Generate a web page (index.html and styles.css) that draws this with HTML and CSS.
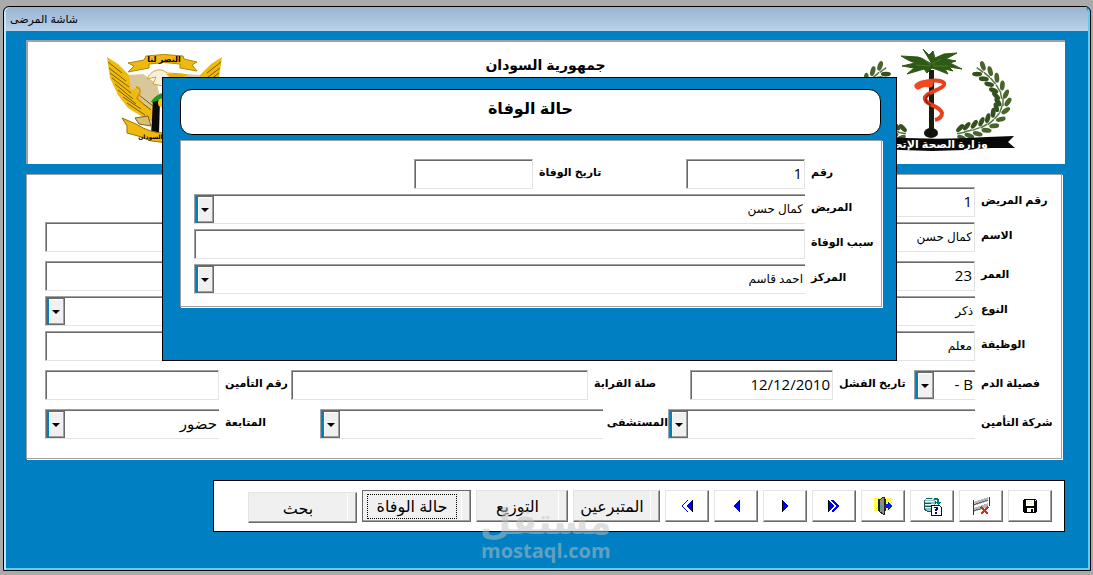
FILE: index.html
```html
<!DOCTYPE html>
<html lang="ar" dir="rtl">
<head>
    <meta charset="UTF-8">
    <meta name="viewport" content="width=device-width, initial-scale=1.0">
    <title>شاشة المرضى</title>
    <link rel="stylesheet" href="styles.css">
</head>
<body>

    <div class="window">
        <div class="titlebar">شاشة المرضى</div>

        <main class="content">
            <header class="header">
                <!-- وزارة الصحة -->
                <svg class="emblem-health" width="186" height="112" viewBox="0 0 186 112">
                    <defs>
                        <g id="leaf">
                            <ellipse cx="0" cy="-5" rx="5" ry="2.4" transform="rotate(-35 0 -5)" fill="#34501d"/>
                            <ellipse cx="0" cy="5" rx="5" ry="2.4" transform="rotate(35 0 5)" fill="#47652c"/>
                            <path d="M-4 0H4" stroke="#5b7440" stroke-width="1.5"/>
                        </g>
                        <g id="laurel">
                            <use href="#leaf" transform="translate(144 26) rotate(215)"/>
                            <use href="#leaf" transform="translate(151 31) rotate(220)"/>
                            <use href="#leaf" transform="translate(157 37) rotate(230)"/>
                            <use href="#leaf" transform="translate(162 44) rotate(240)"/>
                            <use href="#leaf" transform="translate(165 51) rotate(260)"/>
                            <use href="#leaf" transform="translate(167 58) rotate(270)"/>
                            <use href="#leaf" transform="translate(165 65) rotate(290)"/>
                            <use href="#leaf" transform="translate(161 72) rotate(310)"/>
                            <use href="#leaf" transform="translate(155 78) rotate(320)"/>
                            <use href="#leaf" transform="translate(148 82) rotate(330)"/>
                            <use href="#leaf" transform="translate(140 85) rotate(340)"/>
                            <use href="#leaf" transform="translate(132 87) rotate(345)"/>
                            <use href="#leaf" transform="translate(125 89) rotate(350)"/>
                        </g>
                    </defs>
                    <use href="#laurel"/>
                    <use href="#laurel" transform="translate(191 0) scale(-1 1)"/>
                    <path d="M93 26L98 26L98 88L93 88Z" fill="#1d1a12"/>
                    <path d="M96 20L87 5L93 11L97 7L99 14L108 10L121 9L110 15L120 17L114 19L126 25L113 23L117 27L109 25L112 30L102 26L96 24L91 29L88 25L78 28L71 30L78 24L66 22L79 19L72 16L65 12L82 13L85 14Z" fill="#2f5a16" stroke="#2f5a16" stroke-width="1"/>
                    <path d="M95 21L86 14M96 20L105 15M97 22L112 22M94 22L80 21" stroke="#4c7a26" stroke-width="1"/>
                    <path d="M80 42C88 36 104 35 108 39C110 45 92 47 89 53C87 61 104 61 106 69C106 73 103 75 99 76" fill="none" stroke="#e8401c" stroke-width="4"/>
                    <path d="M82 42C86 39 90 39 94 40" stroke="#f04a20" stroke-width="7" stroke-linecap="round"/>
                    <path d="M94 50C88 54 89 59 95 61" fill="none" stroke="#8a2a12" stroke-width="2"/>
                    <ellipse cx="95" cy="89" rx="7" ry="5" fill="#15120c"/>
                    <path d="M12 93L40 92Q95 97 151 93L178 92L172 98L179 104L155 104Q95 110 40 104L12 104L19 98Z" fill="#080808"/>
                    <text x="95" y="104" class="ribbon-white">وزارة الصحة الإتحادية</text>
                </svg>

                <h1 class="country">جمهورية السودان</h1>

                <!-- شعار السودان -->
                <svg class="emblem-sudan" width="126" height="98" viewBox="0 0 126 98">
                    <defs>
                        <g id="wing">
                            <path d="M28 25L42 24L56 34L62 60L50 72L36 60L22 40Z" fill="#d9c79a"/>
                            <path d="M6 7L17 14L28 25L30 40L36 38L39 52L50 58L54 72L40 66L27 58L17 45L9 28Z" fill="#eebb0c"/>
                            <path d="M7 12L21 23M8 18L25 31M9 23L28 37M11 28L30 43M14 34L32 49M17 40L35 54M22 47L40 59M26 53L44 65M35 48L50 60M38 45L52 56" stroke="#7d5b08" stroke-width="1"/>
                        </g>
                    </defs>
                    <use href="#wing"/>
                    <use href="#wing" transform="translate(127 0) scale(-1 1)"/>
                    <path d="M46 29C50 20 60 17 66 23L82 24L87 27L76 30L68 27L62 36L52 34L55 27Z" fill="#f7f1dc" stroke="#c9a23a" stroke-width="1"/>
                    <path d="M65 24L86 24L84 27L70 28Z" fill="#e3ae10"/>
                    <path d="M35 37C41 38 39 44 36 48L42 54" fill="none" stroke="#d59c08" stroke-width="2"/>
                    <path d="M52 84V52Q63 38 74 52V84Z" fill="#fff" stroke="#9a7a20" stroke-width="1"/>
                    <path d="M52 53Q63 38 74 53" fill="none" stroke="#1e9a22" stroke-width="5"/>
                    <path d="M52 52L59 50L58 84L50 84Z" fill="#0a0a0a"/>
                    <circle cx="61" cy="53" r="4" fill="#f3c81a"/>
                    <path d="M34 68L47 66L50 76L38 74Z" fill="#d8c070" stroke="#806010" stroke-width="1"/>
                    <path d="M45 6Q63 3 82 6L83 9L96 12L91 15L96 21L79 18V14Q63 11 48 14V18L27 22L33 16L27 13L43 10Z" fill="#efb90e" stroke="#b58408" stroke-width="1"/>
                    <path d="M26 76L21 68L35 74Q63 92 92 74L105 68L100 76L102 84L90 86Q63 99 37 86L26 83Z" fill="#efb90e" stroke="#9a7208" stroke-width="1"/>
                    <text x="63" y="12" class="ribbon-black">النصر لنا</text>
                    <text x="63" y="89" class="ribbon-black ribbon-small">جمهورية السودان</text>
                </svg>
            </header>

            <form class="patient">
                <div class="row">
                    <label class="lead" for="pid">رقم المريض</label>
                    <input class="field w-id" id="pid" type="text" value="1">
                </div>
                <div class="row">
                    <label class="lead" for="pname">الاسم</label>
                    <input class="field name" id="pname" type="text" value="كمال حسن">
                </div>
                <div class="row spaced">
                    <label class="lead" for="age">العمر</label>
                    <input class="field" id="age" type="text" value="23">
                </div>
                <div class="row">
                    <label class="lead" for="gender">النوع</label>
                    <span class="combo"><select class="name" id="gender"><option>ذكر</option><option>أنثى</option></select></span>
                </div>
                <div class="row">
                    <label class="lead" for="job">الوظيفة</label>
                    <input class="field name" id="job" type="text" value="معلم">
                </div>
                <div class="row spaced">
                    <label class="lead" for="blood">فصيلة الدم</label>
                    <span class="combo w-blood"><select id="blood"><option>B -</option><option>B +</option></select></span>
                    <label class="l-fail" for="fail">تاريخ الفشل</label>
                    <input class="field w-date" id="fail" type="text" value="12/12/2010">
                    <label class="l-kin" for="kin">صلة القرابة</label>
                    <input class="field" id="kin" type="text">
                    <label class="l-insno" for="insno">رقم التأمين</label>
                    <input class="field w-last" id="insno" type="text">
                </div>
                <div class="row spaced">
                    <label class="lead" for="company">شركة التأمين</label>
                    <span class="combo"><select id="company"><option></option></select></span>
                    <label class="l-hosp" for="hospital">المستشفى</label>
                    <span class="combo w-hosp"><select id="hospital"><option></option></select></span>
                    <label class="l-follow" for="follow">المتابعة</label>
                    <span class="combo w-last"><select id="follow"><option>حضور</option><option>غياب</option></select></span>
                </div>
            </form>

            <nav class="toolbar">
                <button type="button" class="btn icon" aria-label="حفظ">
                    <svg width="14" height="14" viewBox="0 0 14 14" shape-rendering="crispEdges">
                        <path d="M1 0H13V1H14V13H13V14H1V13H0V1H1Z" fill="#000"/>
                        <path d="M3 1H11V7H3Z" fill="#fffff0"/>
                        <path d="M4 2h1v1h-1zM6 2h1v1h-1zM8 2h1v1h-1zM4 4h1v1h-1zM6 4h1v1h-1zM8 4h1v1h-1z" fill="#f0e860"/>
                        <path d="M4 9H11V13H4Z" fill="#fff"/>
                        <path d="M8 10H10V13H8Z" fill="#000"/>
                        <path d="M12 1H13V2H12Z" fill="#fff"/>
                    </svg>
                </button>
                <button type="button" class="btn icon" aria-label="حذف">
                    <svg width="18" height="18" viewBox="0 0 18 18" shape-rendering="crispEdges">
                        <path d="M1 5L16 0V4L1 9ZM1 11L16 6V10L1 15Z" fill="#b8b8b8"/>
                        <path d="M1 8L16 3M1 14L11 11" stroke="#666" stroke-width="1"/>
                        <path d="M1 3V18M17 0V9" stroke="#333" stroke-width="1"/>
                        <path d="M9 10L16 17M16 10L9 17" stroke="#e02a10" stroke-width="2"/>
                    </svg>
                </button>
                <button type="button" class="btn icon" aria-label="استعلام">
                    <svg width="19" height="19" viewBox="0 0 19 19" shape-rendering="crispEdges">
                        <path d="M1 3L4 1H9L12 3V12L9 14H4L1 12Z" fill="#8fc0c0"/>
                        <path d="M2 4H11M2 7H11M2 10H11M3 2H10" stroke="#e8f8f8" stroke-width="1"/>
                        <path d="M1 3V12L4 14H8M12 4V7M1 6H8M1 9H8M3 1H9" fill="none" stroke="#155a5a" stroke-width="1"/>
                        <path d="M11 1H14L16 3V5H18L15 8L12 5H14V3H11Z" fill="#007878"/>
                        <path d="M8 8H16L18 10V18H8Z" fill="#fff" stroke="#101030" stroke-width="1"/>
                        <path d="M11 10H15V13H14V14H12V12H13V11H11ZM12 15H14V17H12Z" fill="#000080"/>
                    </svg>
                </button>
                <button type="button" class="btn icon" aria-label="خروج">
                    <svg width="18" height="18" viewBox="0 0 18 18" shape-rendering="crispEdges">
                        <path d="M0 1H17V14H0Z" fill="#ffff3c"/>
                        <path d="M0 2H4M0 4H4M0 6H4M0 8H4M0 10H4M0 12H4M12 2H17M12 4H17M12 13H17" stroke="#fff" stroke-width="1" stroke-dasharray="1 1"/>
                        <path d="M4 14V2H11V14" fill="#fff" stroke="#222" stroke-width="1"/>
                        <path d="M5 3L10 0V18L5 14Z" fill="#8c8c8c" stroke="#222" stroke-width="1"/>
                        <path d="M6 9H8V11H6Z" fill="#00b8b8"/>
                        <path d="M11 7H14V5L18 9L14 13V11H11Z" fill="#0020e0"/>
                    </svg>
                </button>
                <button type="button" class="btn icon" aria-label="الأخير">
                    <svg width="12" height="12" viewBox="0 0 12 12" shape-rendering="crispEdges">
                        <path d="M0 0L6 6L0 12Z" fill="#0000f0"/>
                        <path d="M0 0V12" stroke="#000" stroke-width="2"/>
                        <path d="M4 0L10 6L4 12" fill="none" stroke="#0000f0" stroke-width="2"/>
                    </svg>
                </button>
                <button type="button" class="btn icon" aria-label="التالي">
                    <svg width="8" height="12" viewBox="0 0 8 12" shape-rendering="crispEdges">
                        <path d="M1 0L7 6L1 12Z" fill="#0000f0"/>
                        <path d="M1 0V12" stroke="#000" stroke-width="1"/>
                    </svg>
                </button>
                <button type="button" class="btn icon" aria-label="السابق">
                    <svg width="8" height="12" viewBox="0 0 8 12" shape-rendering="crispEdges">
                        <path d="M7 0L1 6L7 12Z" fill="#0000f0"/>
                        <path d="M7 0V12" stroke="#000" stroke-width="1"/>
                    </svg>
                </button>
                <button type="button" class="btn icon" aria-label="الأول">
                    <svg width="12" height="12" viewBox="0 0 12 12" shape-rendering="crispEdges">
                        <path d="M11 0L5 6L11 12Z" fill="#0000f0"/>
                        <path d="M11 0V12" stroke="#000" stroke-width="1"/>
                        <path d="M7 0L1 6L7 12" fill="none" stroke="#0000f0" stroke-width="1"/>
                    </svg>
                </button>
                <button type="button" class="btn text donors">المتبرعين</button>
                <button type="button" class="btn text dist">التوزيع</button>
                <button type="button" class="btn text death"><span>حالة الوفاة</span></button>
                <button type="button" class="btn text search">بحث</button>
            </nav>
        </main>

        <section class="dialog">
            <h2 class="dialog-title">حالة الوفاة</h2>
            <form class="dialog-form">
                <div class="row">
                    <label class="lead" for="did">رقم</label>
                    <input class="field w-short" id="did" type="text" value="1">
                    <label class="l-death" for="ddate">تاريخ الوفاة</label>
                    <input class="field w-short" id="ddate" type="text">
                </div>
                <div class="row">
                    <label class="lead" for="dpatient">المريض</label>
                    <span class="combo"><select class="name" id="dpatient"><option>كمال حسن</option></select></span>
                </div>
                <div class="row">
                    <label class="lead" for="cause">سبب الوفاة</label>
                    <input class="field" id="cause" type="text">
                </div>
                <div class="row">
                    <label class="lead" for="center">المركز</label>
                    <span class="combo"><select class="name" id="center"><option>احمد قاسم</option></select></span>
                </div>
            </form>
        </section>

        <div class="watermark">
            <span class="wm-ar">مستقل</span>
            <span class="wm-en">mostaql.com</span>
        </div>
    </div>

</body>
</html>
```
FILE: styles.css
```css
*,
*::before,
*::after {
    box-sizing: border-box;
}

body {
    margin: 0;
    padding: 6px 2px 4px 3px;
    min-height: 100vh;
    display: flex;
    background-color: #ababab;
    font-family: "Liberation Sans", "DejaVu Sans", sans-serif;
    font-size: 12px;
    color: #000;
}

.window {
    position: relative;
    flex: 1;
    display: flex;
    flex-direction: column;
    border: 1px solid #000;
    border-radius: 6px 6px 0 0;
    background-color: #0080c2;
    box-shadow: inset 2px 1px #c8e4f8, inset -2px -2px #5cd0f0;
}

.titlebar {
    height: 24px;
    margin: 0 2px;
    padding: 0 4px;
    line-height: 25px;
    text-align: left;
    font-size: 11px;
    background: linear-gradient(#9ab3cf, #b9d1ea);
    border-radius: 5px 5px 0 0;
}

.content {
    flex: 1;
    display: flex;
    flex-direction: column;
    padding: 9px 25px 0 22px;
}

/* header */
.header {
    display: grid;
    grid-template-columns: 1fr auto 1fr;
    height: 124px;
    padding: 0 43px 0 73px;
    background-color: #fff;
    border-top: 2px solid #a0a0a0;
    border-left: 2px solid #a0a0a0;
}

.emblem-health {
    margin-top: 2px;
}

.emblem-sudan {
    margin-top: 8px;
    justify-self: end;
}

.country {
    margin: 13px 32px 0 0;
    font-size: 14px;
    line-height: 20px;
}

.ribbon-black,
.ribbon-white {
    font-size: 8px;
    font-weight: bold;
    text-anchor: middle;
}

.ribbon-small {
    font-size: 6px;
}

.ribbon-white {
    font-size: 11px;
    fill: #fff;
}

/* form rows */
.patient {
    display: flex;
    flex-direction: column;
    gap: 5px;
    margin: 10px 3px 0 0;
    padding: 12px 0 19px 18px;
    background-color: #fff;
    border: 1px solid #a0a0a0;
    box-shadow: 1px 1px #fff;
}

.row {
    display: flex;
    height: 30px;
}

.spaced {
    margin-top: 4px;
}

label {
    flex: none;
    padding-left: 6px;
    line-height: 26px;
    font-size: 11px;
    font-weight: bold;
    text-align: left;
    white-space: nowrap;
}

.patient .lead {
    width: 86px;
}

.dialog-form .lead {
    width: 76px;
}

.l-fail {
    width: 81px;
}

.l-kin {
    width: 102px;
}

.l-insno {
    width: 72px;
}

.l-hosp {
    width: 65px;
}

.l-follow {
    width: 101px;
}

.l-death {
    width: 153px;
}

.field,
.combo {
    flex: 1;
    min-width: 0;
    border: 1px solid #e3e3e3;
    border-top-color: #a0a0a0;
    border-left-color: #a0a0a0;
    box-shadow: inset 1px 1px #696969;
    background-color: #fff;
}

.field,
.combo select {
    padding: 0 2px 2px;
    font-family: "Open Sans", "DejaVu Sans", sans-serif;
    font-size: 15px;
    color: #000;
}

.field.name,
.combo select.name {
    font-size: 12px;
}

.combo {
    position: relative;
    display: flex;
    border-right: none;
}

.combo select {
    flex: 1;
    min-width: 0;
    border: none;
    background: transparent;
    appearance: none;
}

/* drop-down button drawn over the select */
.combo::before {
    content: "";
    position: absolute;
    left: 1px;
    top: 1px;
    bottom: 0;
    width: 18px;
    background-color: #f0f0f0;
    border: 1px solid #696969;
    border-left: 2px solid #0080c2;
    box-shadow: inset -1px -1px #a0a0a0, inset 1px 1px #fff;
    pointer-events: none;
}

.combo::after {
    content: "";
    position: absolute;
    left: 6px;
    top: 13px;
    border: 4px solid transparent;
    border-top-color: #000;
    border-bottom: none;
    pointer-events: none;
}

.w-id {
    flex: 0 0 275px;
}

.w-blood {
    flex: 0 0 61px;
}

.w-date {
    flex: 0 0 143px;
}

.w-last {
    flex: 0 0 174px;
}

.w-hosp {
    flex: 0 0 283px;
}

.w-short {
    flex: 0 0 119px;
}

/* toolbar */
.toolbar {
    align-self: flex-start;
    display: flex;
    gap: 5px;
    margin-top: 21px;
    padding: 9px 12px 8px 34px;
    background-color: #fff;
    border: 1px solid #000;
}

.btn {
    display: flex;
    align-items: center;
    justify-content: center;
    height: 32px;
    padding: 0;
    border: 1px solid #e3e3e3;
    border-right-color: #696969;
    border-bottom-color: #696969;
    box-shadow: inset -1px -1px #a0a0a0;
    background-color: #fff;
    color: #000;
}

.icon {
    width: 44px;
}

.text {
    position: relative;
    padding-right: 9px;
    background-color: #f0f0f0;
    font-family: "Noto Sans", "DejaVu Sans", sans-serif;
    font-size: 16px;
}

.text::after {
    content: "";
    position: absolute;
    right: 8px;
    top: 0;
    bottom: 1px;
    width: 1px;
    background-color: #fff;
}

.donors {
    width: 87px;
}

.dist {
    width: 92px;
}

.death {
    width: 109px;
    border-top-color: #696969;
    border-left-color: #696969;
}

.death span {
    padding: 0 9px;
    line-height: 23px;
    border: 1px dotted #000;
}

.search {
    width: 109px;
    margin-top: 2px;
    height: 31px;
}

/* death case window */
.dialog {
    position: absolute;
    top: 70px;
    left: 158px;
    right: 193px;
    padding: 11px 14px 53px 17px;
    background-color: #0080c2;
    border: 1px solid #000;
}

.dialog-title {
    margin: 0 1px 5px 0;
    height: 46px;
    line-height: 38px;
    text-align: center;
    font-size: 16px;
    background-color: #fff;
    border: 1px solid #000;
    border-radius: 12px;
}

.dialog-form {
    display: flex;
    flex-direction: column;
    gap: 5px;
    padding: 18px 0 12px 13px;
    background-color: #fff;
    border: 1px solid #a0a0a0;
    box-shadow: 1px 1px #fff;
}

.watermark {
    position: absolute;
    left: 476px;
    bottom: 7px;
    display: flex;
    flex-direction: column;
    align-items: center;
    color: #c0c0c0;
    opacity: 0.5;
    font-weight: bold;
    pointer-events: none;
}

.wm-ar {
    font-size: 36px;
    line-height: 34px;
}

.wm-en {
    font-family: "Open Sans", sans-serif;
    font-size: 20px;
    line-height: 24px;
}
```
